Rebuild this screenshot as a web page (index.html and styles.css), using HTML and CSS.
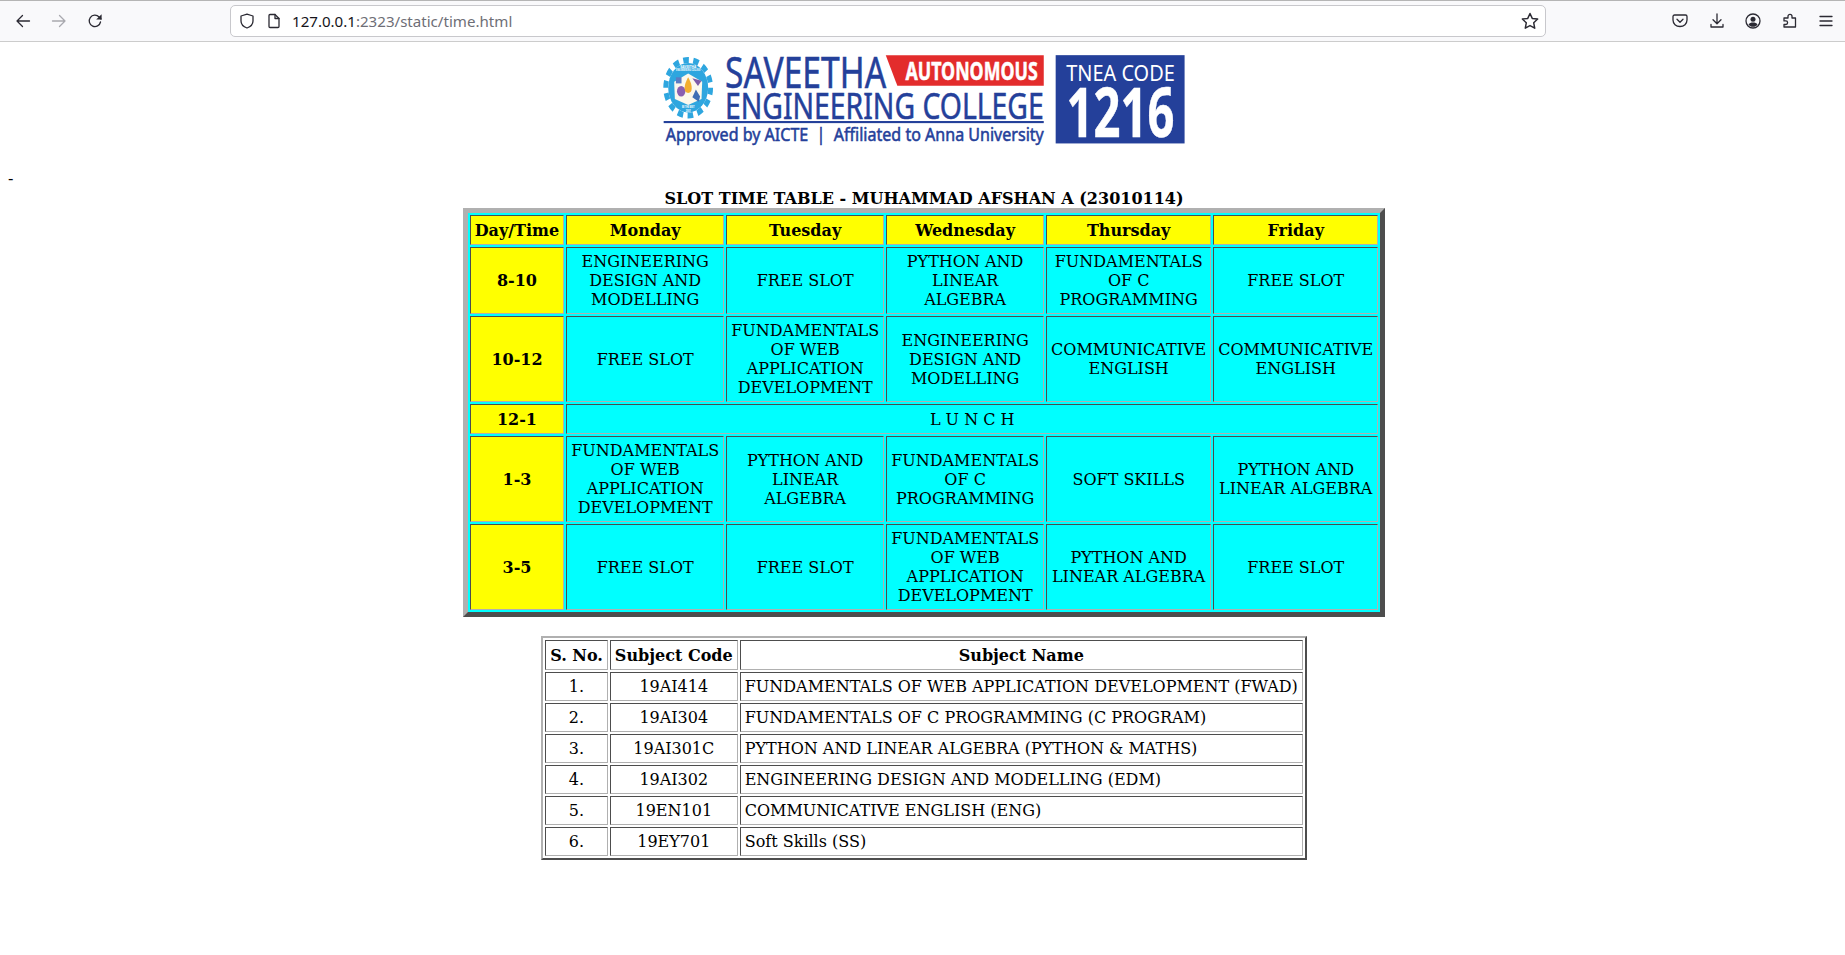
FILE: index.html
```html
<!DOCTYPE html>
<html lang="en">
<head>
<meta charset="utf-8">
<title>Slot Time Table</title>
<link rel="stylesheet" href="styles.css">
</head>
<body>
<header class="toolbar">
  <div class="nav">
    <svg class="ico" viewBox="0 0 16 16"><path d="M14.5 8H2M7.5 2.5 2 8l5.5 5.5"/></svg>
    <svg class="ico dim" viewBox="0 0 16 16"><path d="M1.5 8H14M8.5 2.5 14 8l-5.5 5.5"/></svg>
    <svg class="ico" viewBox="0 0 16 16"><path d="M13.5 9a5.7 5.7 0 1 1-1.4-5L14 6"/><path class="solid" d="M14.6 1.2v5.4H9.2z"/></svg>
  </div>
  <div class="urlbar">
    <svg class="ico" viewBox="0 0 16 16"><path d="M8 1.2 14 3v5c0 3.4-2.6 5.8-6 7-3.4-1.2-6-3.6-6-7V3z"/></svg>
    <svg class="ico page" viewBox="0 0 16 16"><path d="M3 2.5c0-.6.4-1 1-1h5l4 4v8c0 .6-.4 1-1 1H4c-.6 0-1-.4-1-1z"/><path d="M9 1.5v4h4"/></svg>
    <span class="url"><b>127.0.0.1</b>:2323/static/time.html</span>
    <svg class="ico star" viewBox="0 0 16 16"><path d="m8 1.3 2 4.4 4.8.6-3.5 3.3.9 4.8L8 12.1l-4.2 2.3.9-4.8L1.2 6.3 6 5.700z"/></svg>
  </div>
  <div class="tools">
    <svg class="ico" viewBox="0 0 16 16"><path d="M2.500 2h11c.8 0 1.500.7 1.500 1.500V7c0 3.800-3 6.500-7 6.500S1 10.800 1 7V3.500C1 2.700 1.700 2 2.500 2z"/><path d="M5 6.300 8 9.300l3-3"/></svg>
    <svg class="ico" viewBox="0 0 16 16"><path d="M8 1v9.500M4 6.800 8 10.800l4-4M2 11.500V14h12v-2.500"/></svg>
    <svg class="ico" viewBox="0 0 16 16"><circle cx="8" cy="8" r="7"/><circle class="solid" cx="8" cy="6.200" r="2.500"/><path class="solid" d="M3.500 11.500c1-1.500 2.500-2 4.500-2s3.500.5 4.500 2C11.500 13 10 13.800 8 13.800s-3.500-.8-4.500-2.300z"/></svg>
    <svg class="ico" viewBox="0 0 16 16"><path d="M2 5h4V3.300a2 2 0 0 1 4 0V5h3.500v9H2v-2.500h1.800a1.800 1.800 0 0 0 0-3.600H2z"/></svg>
    <svg class="ico" viewBox="0 0 16 16"><path d="M2 3.500h12M2 8h12M2 12.500h12"/></svg>
  </div>
</header>

<main class="page-body">
  <div class="logo-wrap">
    <svg class="logo" viewBox="0 0 1568 314" role="img" aria-label="Saveetha Engineering College">
      <g transform="translate(108 122) scale(1 1.24)">
        <circle class="gear-teeth" r="64"/>
        <circle class="gear-ring" r="57"/>
        <path class="gear-book" d="M-40-14 0-33 40-14 38 26 0 40-38 26z"/>
        <rect class="gear-sq" x="-35" y="-24" width="16" height="14"/>
        <circle class="gear-atom" cx="-20" cy="8" r="12"/>
        <path class="gear-flame" d="M0-24C8-12 10-6 10 2A10 10 0 0 1-10 2C-10-6-8-12 0-24z"/>
        <path class="gear-tool2" d="M12-22 38-16 28-4z"/>
        <path class="gear-tool" d="M12 22 22 4 34 20 30 32z"/>
        <text class="gear-text" y="-46" text-anchor="middle">SAVEETHA</text>
        <text class="gear-small" y="-38" text-anchor="middle">ENGINEERING COLLEGE</text>
        <text class="gear-small" y="47" text-anchor="middle">BE THE BEST</text>
        <text class="gear-small" y="56" text-anchor="middle">2001</text>
      </g>
      <text class="blue thin" x="213" y="123" textLength="460" lengthAdjust="spacingAndGlyphs" font-size="127">SAVEETHA</text>
      <polygon class="red" points="672,29 1123,29 1123,116 705,116"/>
      <text class="white bold" x="728" y="99" textLength="378" lengthAdjust="spacingAndGlyphs" font-size="70">AUTONOMOUS</text>
      <text class="blue thin" x="213" y="210" textLength="910" lengthAdjust="spacingAndGlyphs" font-size="103">ENGINEERING COLLEGE</text>
      <rect class="blue" x="38" y="217" width="1085" height="6"/>
      <text class="blue thin tagline" x="44" y="273" textLength="1079" lengthAdjust="spacingAndGlyphs" font-size="50">Approved by AICTE  |  Affiliated to Anna University</text>
      <rect class="blue" x="1157" y="29" width="368" height="252"/>
      <text class="white thin" x="1187" y="103" textLength="310" lengthAdjust="spacingAndGlyphs" font-size="64">TNEA CODE</text>
      <text class="white bold" x="1188" y="264" textLength="308" lengthAdjust="spacingAndGlyphs" font-size="192">1216</text>
    </svg>
  </div>
  <div class="dash">-</div>
  <div class="title">SLOT TIME TABLE - MUHAMMAD AFSHAN A (23010114)</div>

  <table class="grid slot">
    <tr class="head"><th>Day/Time</th><th>Monday</th><th>Tuesday</th><th>Wednesday</th><th>Thursday</th><th>Friday</th></tr>
    <tr><th class="time">8-10</th><td>ENGINEERING DESIGN AND MODELLING</td><td>FREE SLOT</td><td>PYTHON AND LINEAR ALGEBRA</td><td>FUNDAMENTALS OF C PROGRAMMING</td><td>FREE SLOT</td></tr>
    <tr><th class="time">10-12</th><td>FREE SLOT</td><td>FUNDAMENTALS OF WEB APPLICATION DEVELOPMENT</td><td>ENGINEERING DESIGN AND MODELLING</td><td>COMMUNICATIVE ENGLISH</td><td>COMMUNICATIVE ENGLISH</td></tr>
    <tr class="lunch"><th class="time">12-1</th><td colspan="5">L U N C H</td></tr>
    <tr><th class="time">1-3</th><td>FUNDAMENTALS OF WEB APPLICATION DEVELOPMENT</td><td>PYTHON AND LINEAR ALGEBRA</td><td>FUNDAMENTALS OF C PROGRAMMING</td><td>SOFT SKILLS</td><td>PYTHON AND LINEAR ALGEBRA</td></tr>
    <tr><th class="time">3-5</th><td>FREE SLOT</td><td>FREE SLOT</td><td>FUNDAMENTALS OF WEB APPLICATION DEVELOPMENT</td><td>PYTHON AND LINEAR ALGEBRA</td><td>FREE SLOT</td></tr>
  </table>

  <table class="grid subjects">
    <tr class="head"><th>S. No.</th><th>Subject Code</th><th>Subject Name</th></tr>
    <tr><td>1.</td><td>19AI414</td><td class="name">FUNDAMENTALS OF WEB APPLICATION DEVELOPMENT (FWAD)</td></tr>
    <tr><td>2.</td><td>19AI304</td><td class="name">FUNDAMENTALS OF C PROGRAMMING (C PROGRAM)</td></tr>
    <tr><td>3.</td><td>19AI301C</td><td class="name">PYTHON AND LINEAR ALGEBRA (PYTHON &amp; MATHS)</td></tr>
    <tr><td>4.</td><td>19AI302</td><td class="name">ENGINEERING DESIGN AND MODELLING (EDM)</td></tr>
    <tr><td>5.</td><td>19EN101</td><td class="name">COMMUNICATIVE ENGLISH (ENG)</td></tr>
    <tr><td>6.</td><td>19EY701</td><td class="name">Soft Skills (SS)</td></tr>
  </table>
</main>
</body>
</html>
```
FILE: styles.css
```css
* { box-sizing: border-box; }
html, body { margin: 0; background: #fff; }
body { font-family: "DejaVu Serif", serif; font-size: 16px; color: #000; }

.toolbar {
  height: 42px;
  display: flex;
  align-items: center;
  background: #f9f9fb;
  border-top: 1px solid #b5b5b5;
  border-bottom: 1px solid #ccc;
  padding: 0 11px 0 15px;
}
.ico { width: 16px; height: 16px; flex: none; fill: none; stroke: #2b2a33; stroke-width: 1.3; stroke-linejoin: round; stroke-linecap: round; }
.ico .solid { fill: #2b2a33; stroke: none; }
.ico.dim { stroke: #a9a9ae; }
.nav { display: flex; gap: 20px; width: 215px; }
.urlbar {
  width: 1316px;
  height: 32px;
  display: flex;
  align-items: center;
  gap: 11px;
  padding: 0 8px;
  background: #fff;
  border: 1px solid #c8c8cc;
  border-radius: 5px;
}
.url { flex: 1; font-family: "Noto Sans", sans-serif; font-size: 15.100px; color: #6e6e76; margin-left: -1px; }
.url b { font-weight: 400; color: #15141a; }
.star { width: 18px; height: 18px; margin-right: -2px; }
.tools { display: flex; gap: 20.500px; margin-left: auto; }

.page-body { padding: 0 5px 0 8px; }
.logo-wrap { padding-top: 3px; display: flex; justify-content: center; }
.logo { width: 550px; height: 110px; display: block; margin-left: 2px; overflow: visible; }
.logo text { font-family: "Noto Sans", sans-serif; }
.blue { fill: #24409a; }
.red { fill: #e32c2c; }
.white { fill: #fff; }
.thin { font-weight: 400; }
.bold { font-weight: 700; }
text.blue { stroke: #24409a; stroke-width: 1.5; }
text.white.bold { stroke: #fff; stroke-width: 1.5; }
.tagline { white-space: pre; }
.gear-teeth { fill: none; stroke: #2ea6df; stroke-width: 14; stroke-dasharray: 16 12.700; }
.gear-ring { fill: #2ea6df; }
.gear-book { fill: #fbf8ec; }
.gear-sq { fill: #5b7cc4; }
.gear-atom { fill: #8a5fb0; }
.gear-flame { fill: #f3ae2f; }
.gear-tool { fill: #3f6fb5; }
.gear-tool2 { fill: #7d5aa8; }
.logo .gear-text { font-size: 9px; font-weight: 700; fill: #fff; }
.logo .gear-small { font-size: 6px; font-weight: 700; fill: #fff; }

.dash { margin-top: 14px; height: 19px; line-height: 19px; }
.title { height: 20px; padding-top: 1px; line-height: 20px; text-align: center; font-weight: 700; }

.grid {
  margin: 0 auto;
  border-collapse: separate;
  border-spacing: 2px;
  border-style: solid;
  border-color: #b0b0b0 #4d4d4d #4d4d4d #b0b0b0;
}
.grid th, .grid td {
  padding: 4px;
  line-height: 19px;
  text-align: center;
  border: 1px solid;
  border-color: #4d4d4d #b0b0b0 #b0b0b0 #4d4d4d;
}
.slot { width: 922px; border-width: 5px; background: #0ff; }
.slot td { background: #0ff; }
.slot .head th, .slot .time { background: #ff0; }
.grid .head th, .slot .lunch th { height: 30px; }
.subjects { margin-top: 19px; border-width: 2px; }
.subjects td.name { text-align: left; }
```
